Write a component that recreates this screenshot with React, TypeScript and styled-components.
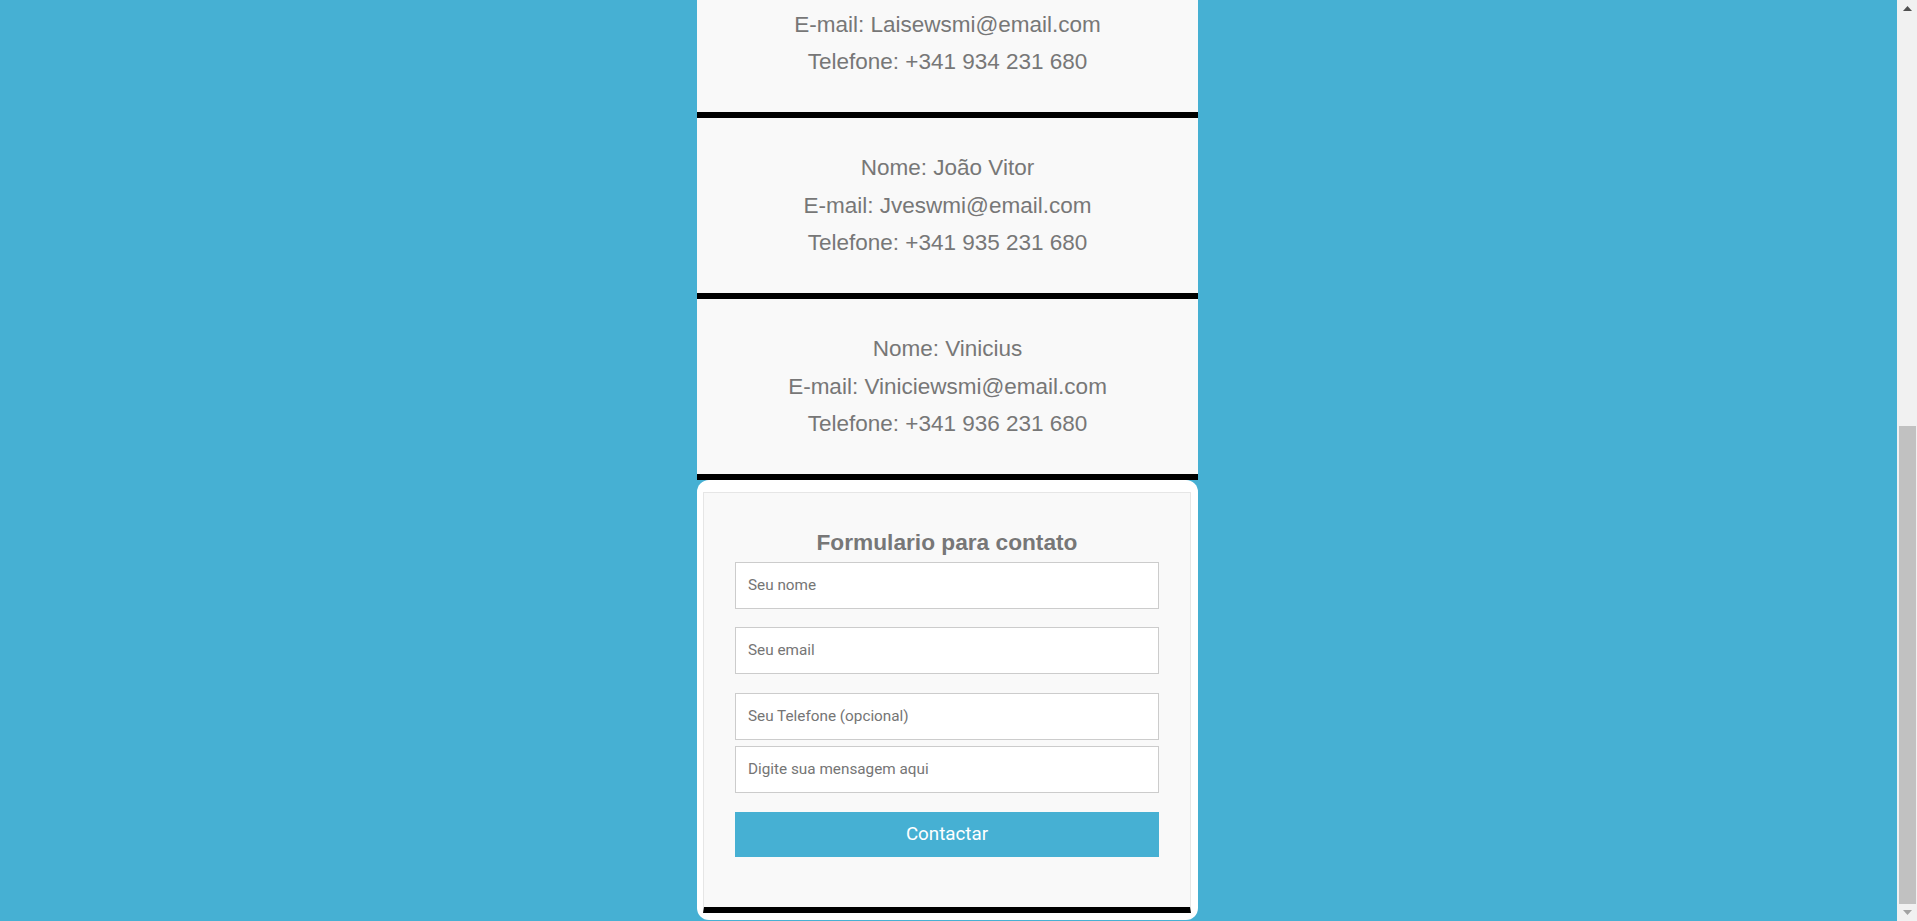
import React, { useLayoutEffect, useEffect, useRef, useState } from "react";
import styled, { createGlobalStyle } from "styled-components";

const BLUE = "#46b0d3";

const GlobalStyle = createGlobalStyle`
  html, body {
    margin: 0;
    padding: 0;
    height: 100%;
    overflow: hidden;
    background: ${BLUE};
  }
  #root {
    height: 100%;
  }
  * {
    box-sizing: border-box;
  }
`;

const Viewport = styled.div`
  height: 100vh;
  display: flex;
`;

const Scroller = styled.div`
  flex: 1;
  min-width: 0;
  height: 100%;
  overflow-y: scroll;
  background: ${BLUE};
  font-family: "Liberation Sans", Arial, sans-serif;
  scrollbar-width: none;

  &::-webkit-scrollbar {
    display: none;
  }
`;

const ScrollTrack = styled.div`
  width: 20px;
  height: 100%;
  background: #f1f1f1;
  display: flex;
  flex-direction: column;
`;

const ArrowButton = styled.div`
  height: 17px;
  flex: none;
  display: flex;
  align-items: center;
  justify-content: center;
  padding-left: 1px;
`;

const ThumbRail = styled.div`
  flex: 1;
  position: relative;
`;

const Thumb = styled.div`
  position: absolute;
  left: 2px;
  right: 1px;
  background: #c1c1c1;
`;

const Column = styled.main`
  width: 501px;
  margin: 0 auto;
  display: flex;
  flex-direction: column;
  padding: 0 0 1px;
  position: relative;
  left: -1px;
`;

const ContactCard = styled.section`
  background: #f9f9f9;
  border-bottom: 6px solid #000;
  padding: 31px 0 31.5px;
  text-align: center;
  color: #777;
`;

const Line = styled.p`
  margin: 0;
  font-size: 22.5px;
  line-height: 37.5px;
`;

const FormShell = styled.div`
  background: #fff;
  border-radius: 12px;
  padding: 12px 7px 7px 6px;
`;

const FormBox = styled.form`
  background: #f9f9f9;
  border: 1px solid #e6e6e6;
  border-bottom: 6px solid #000;
  padding: 36.7px 31px 50px;
  display: flex;
  flex-direction: column;
`;

const FormTitle = styled.h2`
  margin: 0 0 7px;
  font-size: 22.7px;
  font-weight: 700;
  line-height: 25.3px;
  color: #777;
  text-align: center;
`;

const Field = styled.input<{ $gap: number }>`
  display: block;
  width: 100%;
  height: 47px;
  margin: 0 0 ${(p) => p.$gap}px;
  padding: 0 12px;
  border: 1px solid #cccccc;
  background: #fff;
  font-family: Roboto, "Liberation Sans", sans-serif;
  font-size: 15.3px;
  color: #555;
  outline: none;

  &::placeholder {
    color: #757575;
  }
`;

const SubmitButton = styled.button`
  display: block;
  width: 100%;
  height: 45px;
  border: none;
  background: ${BLUE};
  color: #fff;
  font-family: Roboto, "Liberation Sans", sans-serif;
  font-size: 18.8px;
  cursor: pointer;
`;

type Contact = { nome: string; email: string; telefone: string };

const contacts: Contact[] = [
  { nome: "Ana", email: "Anaewsmi@email.com", telefone: "+341 930 231 680" },
  { nome: "Bruno", email: "Brunoewsmi@email.com", telefone: "+341 931 231 680" },
  { nome: "Carla", email: "Carlaewsmi@email.com", telefone: "+341 932 231 680" },
  { nome: "Diego", email: "Diegoewsmi@email.com", telefone: "+341 933 231 680" },
  { nome: "Lais", email: "Laisewsmi@email.com", telefone: "+341 934 231 680" },
  { nome: "João Vitor", email: "Jveswmi@email.com", telefone: "+341 935 231 680" },
  { nome: "Vinicius", email: "Viniciewsmi@email.com", telefone: "+341 936 231 680" },
];

const fields = [
  { placeholder: "Seu nome", type: "text", gap: 18 },
  { placeholder: "Seu email", type: "email", gap: 19 },
  { placeholder: "Seu Telefone (opcional)", type: "tel", gap: 6 },
  { placeholder: "Digite sua mensagem aqui", type: "text", gap: 19 },
];

const Arrow = ({ up, color }: { up?: boolean; color: string }) => (
  <svg width="9" height="5" viewBox="0 0 9 5">
    <path d={up ? "M0 5 L4.5 0 L9 5 Z" : "M0 0 L4.5 5 L9 0 Z"} fill={color} />
  </svg>
);

export default function App() {
  const ref = useRef<HTMLDivElement>(null);
  const railRef = useRef<HTMLDivElement>(null);
  const [thumb, setThumb] = useState({ top: 0, height: 0 });

  const measure = () => {
    const el = ref.current;
    const rail = railRef.current;
    if (!el || !rail) return;
    const railH = rail.clientHeight;
    const ratio = el.clientHeight / el.scrollHeight;
    const h = Math.max(20, railH * ratio);
    const maxScroll = el.scrollHeight - el.clientHeight;
    const top = maxScroll > 0 ? (el.scrollTop / maxScroll) * (railH - h) : 0;
    setThumb({ top, height: h });
  };

  const toBottom = () => {
    const el = ref.current;
    if (el) el.scrollTop = el.scrollHeight;
    measure();
  };

  useLayoutEffect(toBottom, []);
  useEffect(() => {
    const t = setTimeout(toBottom, 50);
    return () => clearTimeout(t);
  }, []);

  return (
    <>
      <GlobalStyle />
      <Viewport>
        <Scroller ref={ref} onScroll={measure}>
          <Column>
            {contacts.map((c) => (
              <ContactCard key={c.email}>
                <Line>Nome: {c.nome}</Line>
                <Line>E-mail: {c.email}</Line>
                <Line>Telefone: {c.telefone}</Line>
              </ContactCard>
            ))}
            <FormShell>
              <FormBox onSubmit={(e) => e.preventDefault()}>
                <FormTitle>Formulario para contato</FormTitle>
                {fields.map((f) => (
                  <Field key={f.placeholder} type={f.type} placeholder={f.placeholder} $gap={f.gap} />
                ))}
                <SubmitButton type="submit">Contactar</SubmitButton>
              </FormBox>
            </FormShell>
          </Column>
        </Scroller>
        <ScrollTrack>
          <ArrowButton>
            <Arrow up color="#505050" />
          </ArrowButton>
          <ThumbRail ref={railRef}>
            <Thumb style={{ top: thumb.top, height: thumb.height }} />
          </ThumbRail>
          <ArrowButton>
            <Arrow color="#a3a3a3" />
          </ArrowButton>
        </ScrollTrack>
      </Viewport>
    </>
  );
}
